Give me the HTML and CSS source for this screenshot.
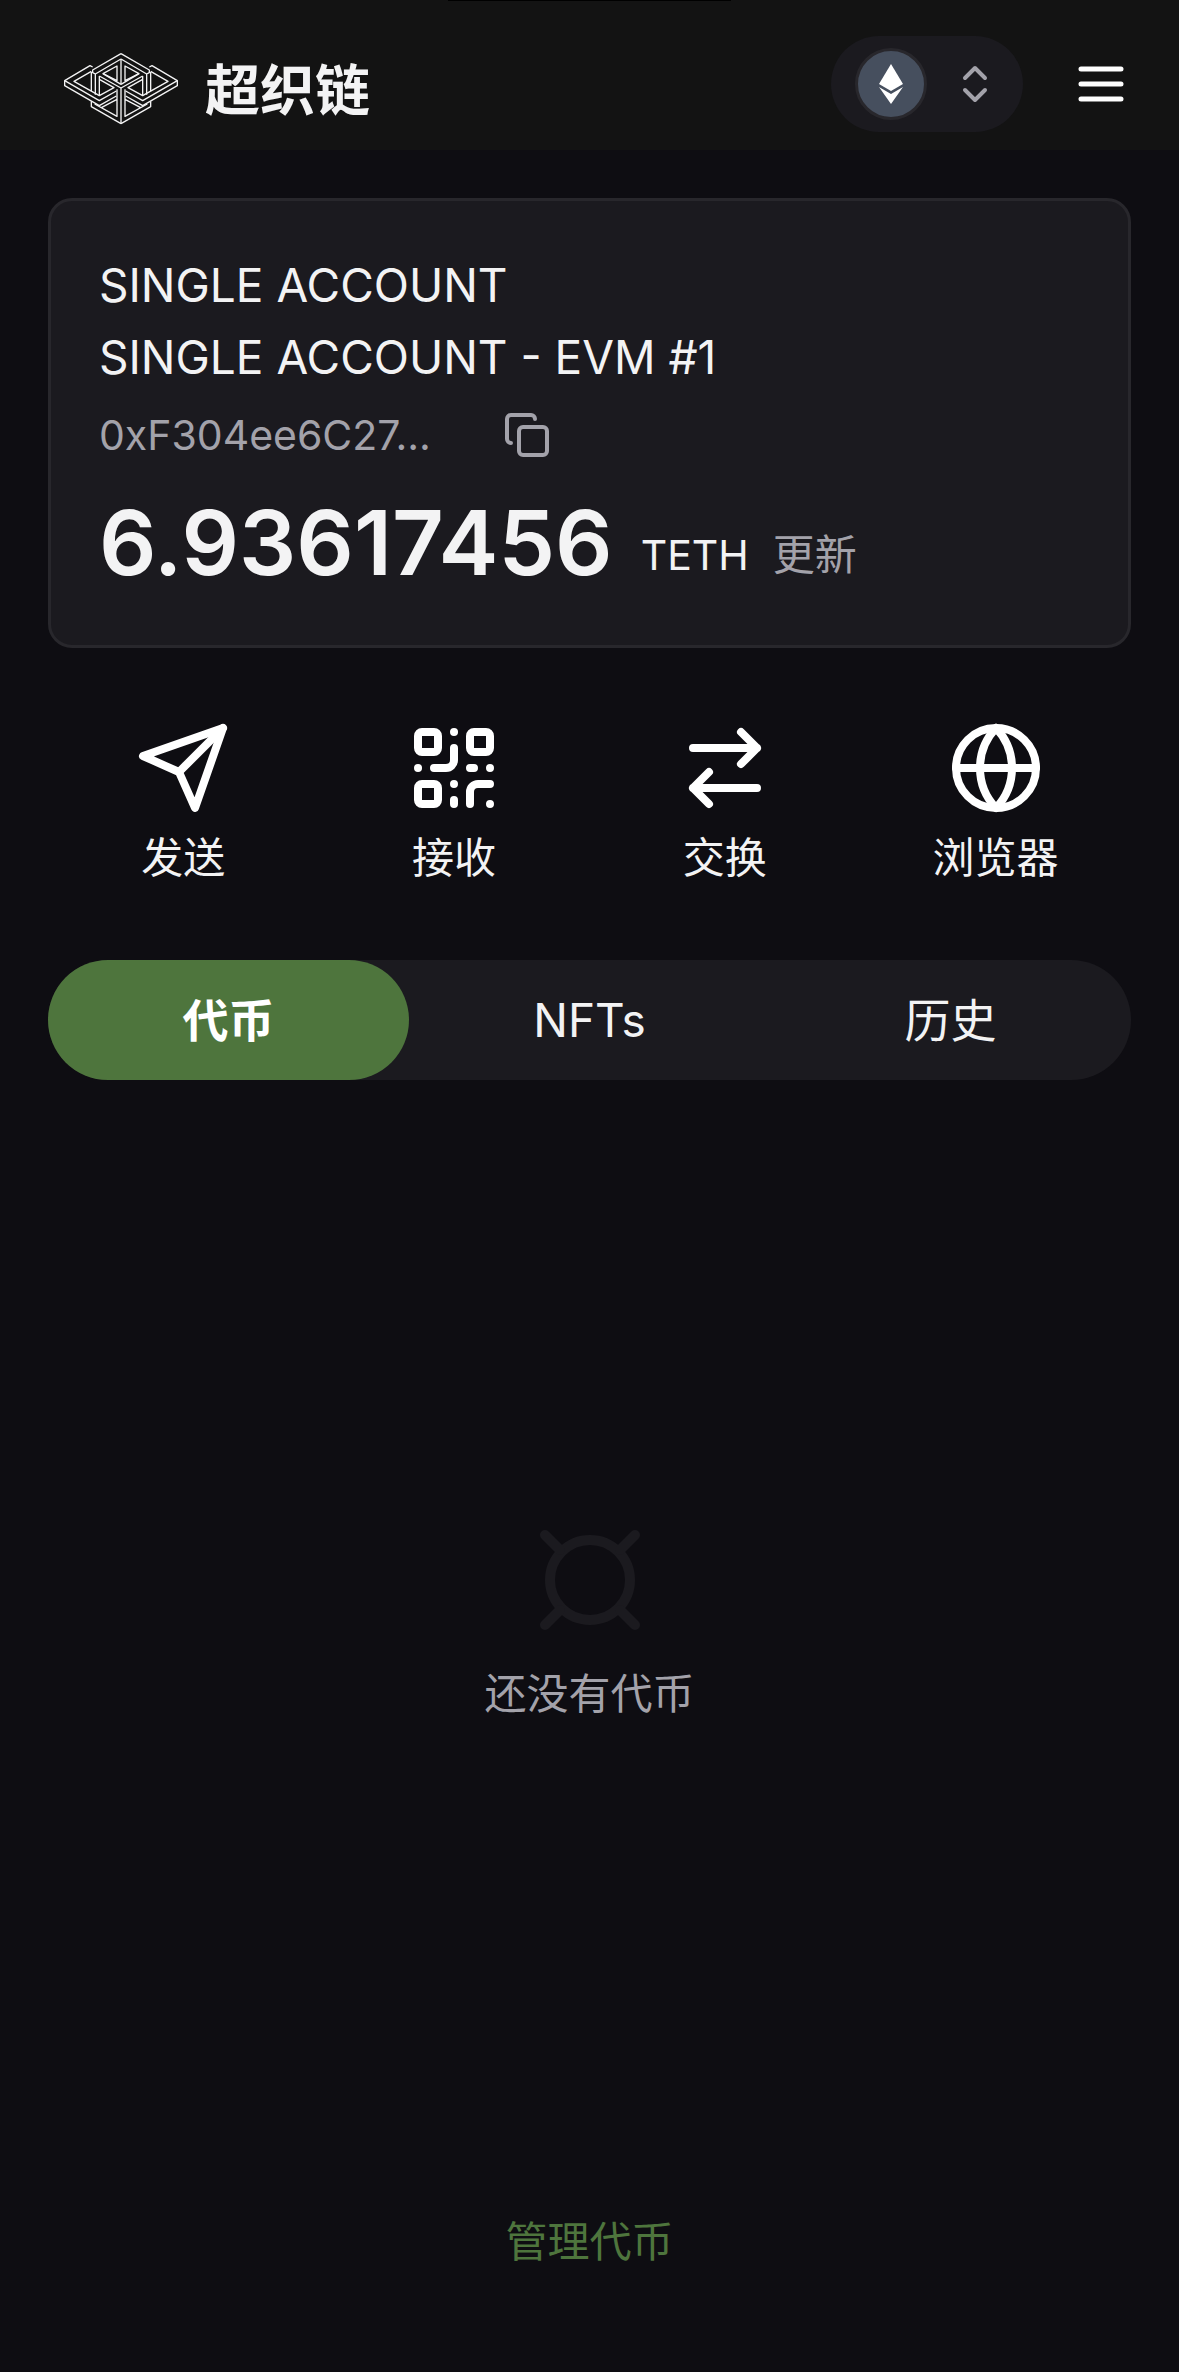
FILE: index.html
```html
<!DOCTYPE html>
<html lang="zh-CN">
<head>
  <meta charset="UTF-8" />
  <meta name="viewport" content="width=device-width, initial-scale=1.0" />
  <title>超织链</title>
  <link rel="stylesheet" href="styles.css">
</head>
<body>
  <header class="topbar">
    <div class="brand">
      <svg class="logo" viewBox="3 9 348 222" aria-hidden="true">
        <g id="half">
          <path d="M177 11 L92 60 V68 L100 72 V134" />
          <path d="M177 27 L100 72 M92 51 L84 47 L8 92 V107 L112 167 L163 138" />
          <path d="M8 92 L112 152 L163 123" />
          <path d="M88 64 L36 94 L112 137 L156 113 L112 88" />
          <path d="M88 66 V123" />
          <path d="M112 78 V137 M112 78 L177 114" />
          <path d="M165 48 V92 L123 71 Z" />
          <path d="M177 103 L123 71" />
          <path d="M88 154 V170 L177 221 M98 162 L165 199 V118 M165 148 L118 173" />
        </g>
        <use href="#half" transform="matrix(-1 0 0 1 354 0)" />
        <path d="M177 27 V103 M177 114 V221" />
      </svg>
      <h1>超织链</h1>
    </div>
    <div class="topbar-actions">
      <button class="network" aria-label="Ethereum">
        <span class="coin">
          <svg viewBox="0 0 24 40" aria-hidden="true">
            <path d="M12 0 24 20 12 27 0 20Z" />
            <path d="M0 23 12 30 24 23 12 40Z" />
          </svg>
        </span>
        <svg class="icon icon-sm" viewBox="0 0 24 24" aria-hidden="true">
          <path d="m7 15 5 5 5-5" />
          <path d="m7 9 5-5 5 5" />
        </svg>
      </button>
      <button class="menu" aria-label="菜单">
        <svg class="icon" viewBox="0 0 24 24" aria-hidden="true">
          <path d="M4 6h16M4 12h16M4 18h16" />
        </svg>
      </button>
    </div>
  </header>

  <main>
    <section class="card">
      <p class="name">SINGLE ACCOUNT</p>
      <p class="name">SINGLE ACCOUNT - EVM #1</p>
      <div class="address">
        <span>0xF304ee6C27...</span>
        <button aria-label="复制">
          <svg class="icon icon-sm" viewBox="0 0 24 24" aria-hidden="true">
            <rect x="8" y="8" width="14" height="14" rx="2" />
            <path d="M4 16c-1.1 0-2-.9-2-2V4c0-1.1.9-2 2-2h10c1.1 0 2 .9 2 2" />
          </svg>
        </button>
      </div>
      <div class="balance">
        <strong>6.93617456</strong>
        <span class="unit">TETH</span>
        <button class="refresh">更新</button>
      </div>
    </section>

    <nav class="actions">
      <button>
        <svg class="icon icon-lg" viewBox="0 0 24 24" aria-hidden="true">
          <path d="m22 2-7 20-4-9-9-4Z" />
          <path d="M22 2 11 13" />
        </svg>
        发送
      </button>
      <button>
        <svg class="icon icon-lg" viewBox="0 0 24 24" aria-hidden="true">
          <rect x="3" y="3" width="5" height="5" rx="1" />
          <rect x="16" y="3" width="5" height="5" rx="1" />
          <rect x="3" y="16" width="5" height="5" rx="1" />
          <path d="M21 16h-3a2 2 0 0 0-2 2v3M21 21v.01M12 7v3a2 2 0 0 1-2 2H7M3 12h.01M12 3h.01M12 16v.01M16 12h1M21 12v.01M12 21v-1" />
        </svg>
        接收
      </button>
      <button>
        <svg class="icon icon-lg" viewBox="0 0 24 24" aria-hidden="true">
          <path d="m16 3 4 4-4 4M20 7H4M8 21l-4-4 4-4M4 17h16" />
        </svg>
        交换
      </button>
      <button>
        <svg class="icon icon-lg" viewBox="0 0 24 24" aria-hidden="true">
          <circle cx="12" cy="12" r="10" />
          <path d="M12 2a14.5 14.5 0 0 0 0 20 14.5 14.5 0 0 0 0-20M2 12h20" />
        </svg>
        浏览器
      </button>
    </nav>

    <div class="tabs" role="tablist">
      <button class="active" role="tab" aria-selected="true">代币</button>
      <button role="tab" aria-selected="false">NFTs</button>
      <button role="tab" aria-selected="false">历史</button>
    </div>

    <section class="empty">
      <svg class="icon" viewBox="0 0 24 24" aria-hidden="true">
        <circle cx="12" cy="12" r="8" />
        <path d="m3 3 3 3M21 3l-3 3M3 21l3-3M21 21l-3-3" />
      </svg>
      <p>还没有代币</p>
    </section>

    <button class="manage">管理代币</button>
  </main>
</body>
</html>
```
FILE: styles.css
```css
* {
  box-sizing: border-box;
}

body {
  margin: 0;
  min-height: 100vh;
  display: flex;
  flex-direction: column;
  background: #0e0d12;
  color: #f3f3f4;
  font-family: Inter, "Noto Sans CJK SC", sans-serif;
  font-size: 42px;
  line-height: 64px;
}

h1, p {
  margin: 0;
}

button {
  padding: 0;
  border: none;
  background: none;
  color: inherit;
  font: inherit;
  cursor: pointer;
}

svg {
  display: block;
}

.icon {
  fill: none;
  stroke: currentColor;
  stroke-width: 2;
  stroke-linecap: round;
  stroke-linejoin: round;
}

.icon-sm {
  width: 48px;
  height: 48px;
  color: #a3a2aa;
}

.icon-lg {
  width: 96px;
  height: 96px;
  color: #ffffff;
}

/* header */
.topbar {
  position: relative;
  display: flex;
  justify-content: space-between;
  align-items: center;
  height: 150px;
  padding: 18px 48px 0 63px;
  background: #131313;
}

/* black strip along the top edge */
.topbar::before {
  content: "";
  position: absolute;
  top: 0;
  left: 38%;
  right: 38%;
  height: 1px;
  background: #000000;
}

.brand {
  display: flex;
  align-items: center;
  gap: 26px;
  padding-top: 12px;
}

.logo {
  width: 116px;
  height: 74px;
  fill: none;
  stroke: #f3f3f4;
  stroke-width: 4;
  stroke-linejoin: round;
}

.brand h1 {
  font-size: 55px;
  font-weight: 600;
}

.topbar-actions {
  display: flex;
  align-items: center;
  gap: 48px;
}

.network {
  display: flex;
  align-items: center;
  gap: 24px;
  height: 96px;
  padding: 0 24px;
  border-radius: 48px;
  background: #1b1a1f;
}

.coin {
  display: flex;
  align-items: center;
  justify-content: center;
  width: 72px;
  height: 72px;
  border: 3px solid #28272c;
  border-radius: 50%;
  background: #464f5e;
}

.coin svg {
  width: 24px;
  height: 40px;
  fill: #ffffff;
}

.menu .icon {
  width: 60px;
  height: 60px;
  color: #ffffff;
}

/* account card */
main {
  flex: 1;
  display: flex;
  flex-direction: column;
  padding: 48px;
}

.card {
  padding: 48px;
  border: 3px solid #28272c;
  border-radius: 24px;
  background: #1b1a1f;
}

.name {
  font-size: 46px;
  line-height: 72px;
}

.address {
  display: flex;
  align-items: center;
  gap: 72px;
  margin-top: 10px;
  font-size: 41px;
  color: #a3a2aa;
}

.balance {
  display: flex;
  align-items: flex-end;
  margin-top: 22px;
}

.balance strong {
  margin-right: 28px;
  font-size: 90px;
  font-weight: 600;
  line-height: 108px;
}

.unit,
.refresh {
  margin-bottom: 10px;
}

.unit {
  font-size: 41px;
}

.refresh {
  margin-left: 24px;
  color: #a3a2aa;
}

/* quick actions */
.actions {
  display: flex;
  margin-top: 72px;
}

.actions button {
  flex: 1;
  display: flex;
  flex-direction: column;
  align-items: center;
  gap: 10px;
}

/* tabs */
.tabs {
  display: flex;
  margin-top: 70px;
  border-radius: 60px;
  background: #1b1a1f;
}

.tabs button {
  flex: 1;
  height: 120px;
  border-radius: 60px;
  font-size: 46px;
}

.tabs .active {
  background: #4e753d;
  color: #ffffff;
  font-weight: 600;
}

/* empty list */
.empty {
  flex: 1;
  display: flex;
  flex-direction: column;
  align-items: center;
  justify-content: center;
  gap: 22px;
  padding-bottom: 44px;
  color: #a3a2aa;
}

.empty .icon {
  width: 120px;
  height: 120px;
  color: #1b1a1f;
}

.manage {
  align-self: center;
  margin-bottom: 50px;
  color: #4e753d;
}
```
